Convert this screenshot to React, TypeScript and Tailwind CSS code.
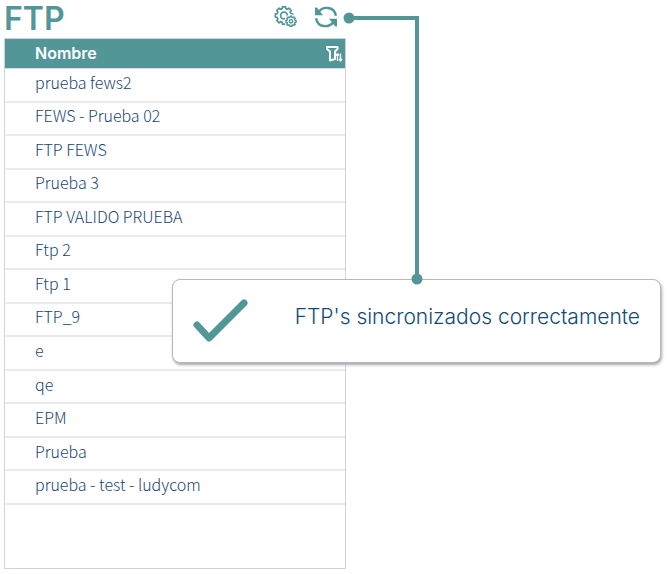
interface FtpServer {
    id: number
    name: string
}

const servers: FtpServer[] = [
    { id: 1, name: 'prueba fews2' },
    { id: 2, name: 'FEWS - Prueba 02' },
    { id: 3, name: 'FTP FEWS' },
    { id: 4, name: 'Prueba 3' },
    { id: 5, name: 'FTP VALIDO PRUEBA' },
    { id: 6, name: 'Ftp 2' },
    { id: 7, name: 'Ftp 1' },
    { id: 8, name: 'FTP_9' },
    { id: 9, name: 'e' },
    { id: 10, name: 'qe' },
    { id: 11, name: 'EPM' },
    { id: 12, name: 'Prueba' },
    { id: 13, name: 'prueba - test - ludycom' },
]

// Closed outline of a gear with flat teeth
function gearPath(cx: number, cy: number, outer: number, inner: number, teeth: number) {
    const step = (Math.PI * 2) / teeth
    const points: string[] = []
    for (let i = 0; i < teeth; i++) {
        const corners = [
            [-0.32, inner],
            [-0.24, outer],
            [0.24, outer],
            [0.32, inner],
        ]
        corners.forEach(([offset, radius]) => {
            const angle = (i + offset) * step
            points.push(`${(cx + radius * Math.cos(angle)).toFixed(2)} ${(cy + radius * Math.sin(angle)).toFixed(2)}`)
        })
    }
    return `M${points.join('L')}Z`
}

function GearsIcon() {
    return (
        <svg viewBox="0 0 24 24" className="size-6" fill="none" stroke="currentColor" strokeWidth="1.7" strokeLinejoin="round">
            <path d={gearPath(10, 10.5, 8.8, 7.1, 8)} />
            <circle cx="10" cy="10.5" r="3.4" />
            <path d={gearPath(17, 16.3, 5.4, 4.3, 8)} fill="white" stroke="white" strokeWidth="3" />
            <path d={gearPath(17, 16.3, 5.2, 4.1, 8)} fill="white" strokeWidth="1.4" />
            <circle cx="17" cy="16.3" r="1.7" strokeWidth="1.4" />
        </svg>
    )
}

function SyncIcon() {
    return (
        <svg viewBox="0 0 24 24" className="size-6" fill="none" stroke="currentColor" strokeWidth="2.4">
            <path d="M4.8 6.8C8.8 1.4 20 .6 22 10.8" />
            <path d="M2 13.2C4 23.4 15.2 22.6 19.2 17.2" />
            <path d="M1 2.6H2.8L9 10.2H1Z" fill="currentColor" stroke="none" />
            <path d="M23 21.4H21.2L15 13.8H23Z" fill="currentColor" stroke="none" />
        </svg>
    )
}

function FilterIcon() {
    return (
        <svg viewBox="0 0 18 18" className="size-[18px]" fill="none" stroke="currentColor" strokeWidth="2" strokeLinejoin="round">
            <path d="M2 2H12.5V4L10 6.5V14L5 15.5V6.5L2 4Z" />
            <path d="M12.5 8.5V16M12.5 8.5L11 10.5M12.5 8.5L14 10.5M15.5 8.5V16M15.5 16L14 14M15.5 16L17 14" strokeWidth="1.3" />
        </svg>
    )
}

// Line that ties the sync button to its message
function Connector() {
    return (
        <svg viewBox="0 0 82 274" className="pointer-events-none absolute top-3 left-[342px] z-20 h-[274px] w-[82px] text-[#529698]" aria-hidden="true">
            <path d="M7 6H75V267" fill="none" stroke="currentColor" strokeWidth="4" />
            <circle cx="7" cy="6" r="5.5" fill="currentColor" />
            <circle cx="75" cy="267" r="5.5" fill="currentColor" />
        </svg>
    )
}

function SyncAlert({ message }: { message: string }) {
    return (
        <div
            role="status"
            className="absolute top-[279px] right-[6px] left-[172px] z-10 flex h-[84px] items-center justify-between rounded-lg border border-[#b8b8b8] bg-white px-5 shadow-[1px_2px_3px_#a3a9b0]"
        >
            <svg viewBox="0 0 56 44" className="h-11 w-14 text-[#529698]" fill="none" stroke="currentColor" strokeWidth="7" strokeLinecap="round" strokeLinejoin="round">
                <path d="M4 26L16 39L51 4" />
            </svg>
            <p className="pb-2 font-[Inter,sans-serif] text-[21px] leading-8 font-light whitespace-nowrap text-[#104a77]">{message}</p>
        </div>
    )
}

export default function App() {
    return (
        <main className="relative min-h-[574px] bg-white px-1">
            <header className="flex h-[38px] w-[342px] items-center justify-between pr-2 text-[#529698]">
                <h1 className="font-[Inter,sans-serif] text-[32px] leading-10 font-semibold">FTP</h1>
                <div className="flex items-center gap-4 pb-1">
                    <button type="button" aria-label="Configurar">
                        <GearsIcon />
                    </button>
                    <button type="button" aria-label="Sincronizar">
                        <SyncIcon />
                    </button>
                </div>
            </header>

            <section className="min-h-[531px] w-[342px] border border-[#d0d3dc]">
                <table className="h-[466px] w-full border-separate border-spacing-0">
                    <thead>
                        <tr className="h-[30px] bg-[#529698] text-white">
                            <th scope="col" className="border-b border-[#dcdcdc] p-0 pb-0.5 pl-[30px] text-left font-[Inter,sans-serif] text-[16px] leading-6 font-semibold">
                                Nombre
                            </th>
                            <th scope="col" className="w-5 border-b border-[#dcdcdc] p-0">
                                <button type="button" aria-label="Filtrar" className="block">
                                    <FilterIcon />
                                </button>
                            </th>
                        </tr>
                    </thead>
                    <tbody>
                        {servers.map((server) => (
                            <tr key={server.id}>
                                <td
                                    colSpan={2}
                                    className="border-b-2 border-[#ebebeb] p-0 pb-1.5 pl-[30px] font-['Noto_Sans_CJK_SC',sans-serif] text-[16px] leading-6 font-light text-[#174674]"
                                >
                                    {server.name}
                                </td>
                            </tr>
                        ))}
                    </tbody>
                </table>
            </section>

            <Connector />
            <SyncAlert message="FTP's sincronizados correctamente" />
        </main>
    )
}
